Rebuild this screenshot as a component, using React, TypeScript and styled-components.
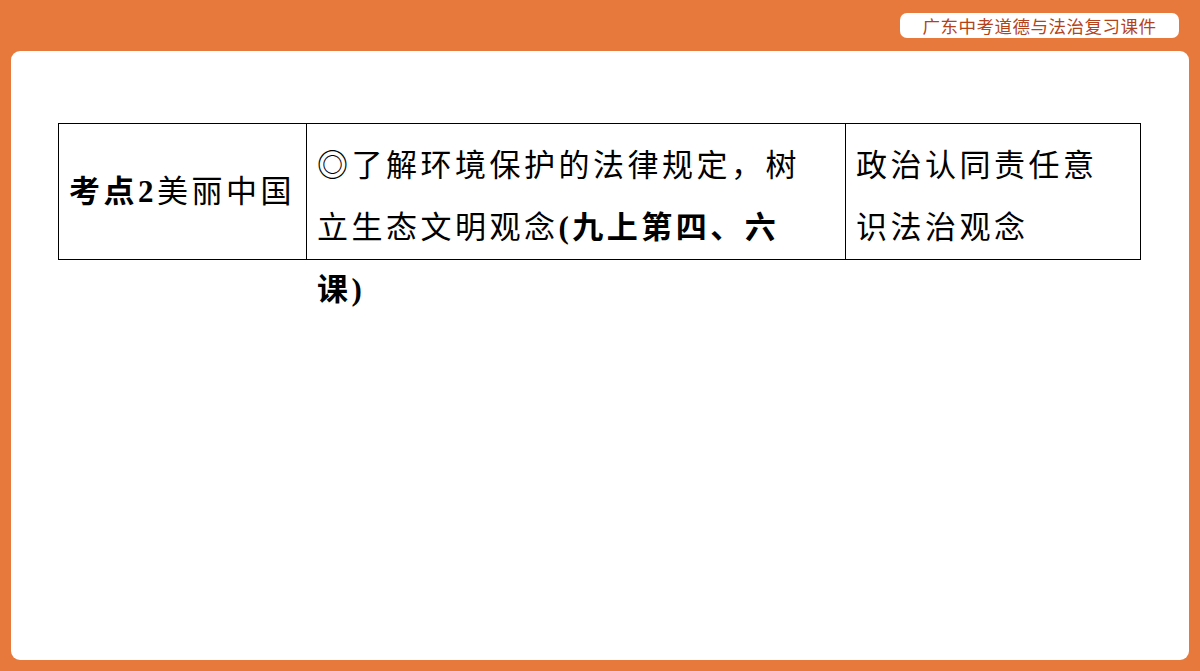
import React from "react";
import styled, { createGlobalStyle } from "styled-components";

const G = createGlobalStyle`
  html, body { margin: 0; padding: 0; }
  body { width: 1200px; height: 671px; overflow: hidden; background: #e8793d; }
`;

const Page = styled.div`
  width: 1200px; height: 671px; box-sizing: border-box;
  background: #e8793d; display: flex; flex-direction: column;
  padding: 0 11px 11px 11px;
`;
const Top = styled.div`
  height: 51px; display: flex; justify-content: flex-end; align-items: flex-start;
  padding-top: 13px; box-sizing: border-box; padding-right: 10px;
`;
const Label = styled.div`
  background: #fff; border-radius: 7px; height: 25px; width: 279px;
  display: flex; align-items: center; justify-content: center;
  font-family: "Noto Sans CJK SC", sans-serif; font-size: 17.5px; color: #b3421a;
  letter-spacing: 0.5px;
`;
const Panel = styled.div`
  flex: 1; background: #fff; border-radius: 9px;
  padding: 72px 0 0 47px;
`;
const Table = styled.div`
  display: grid; grid-template-columns: 248px 539px 296px;
  width: 1083px; border: 1px solid #000; box-sizing: border-box;
  font-family: "Liberation Serif", "Noto Sans CJK SC", serif; font-size: 31px;
  letter-spacing: 3.5px; color: #000;
`;
const Cell = styled.div<{ $last?: boolean; $center?: boolean; $pr?: number }>`
  border-right: ${p => (p.$last ? "none" : "1px solid #000")};
  padding: 11px ${p => p.$pr ?? 8}px 11px 10px; line-height: 62px; height: 135px; box-sizing: border-box;
  display: flex; align-items: ${p => (p.$center ? "center" : "flex-start")};
`;
const B = styled.b` font-weight: bold; `;

export default function App() {
  return (
    <Page>
      <G />
      <Top><Label>广东中考道德与法治复习课件</Label></Top>
      <Panel>
        <Table>
          <Cell $center><span><B>考点2</B>美丽中国</span></Cell>
          <Cell $pr={30}><span>◎了解环境保护的法律规定，树立生态文明观念<B>(九上第四、六课)</B></span></Cell>
          <Cell $last $pr={36}><span>政治认同责任意识法治观念</span></Cell>
        </Table>
      </Panel>
    </Page>
  );
}
